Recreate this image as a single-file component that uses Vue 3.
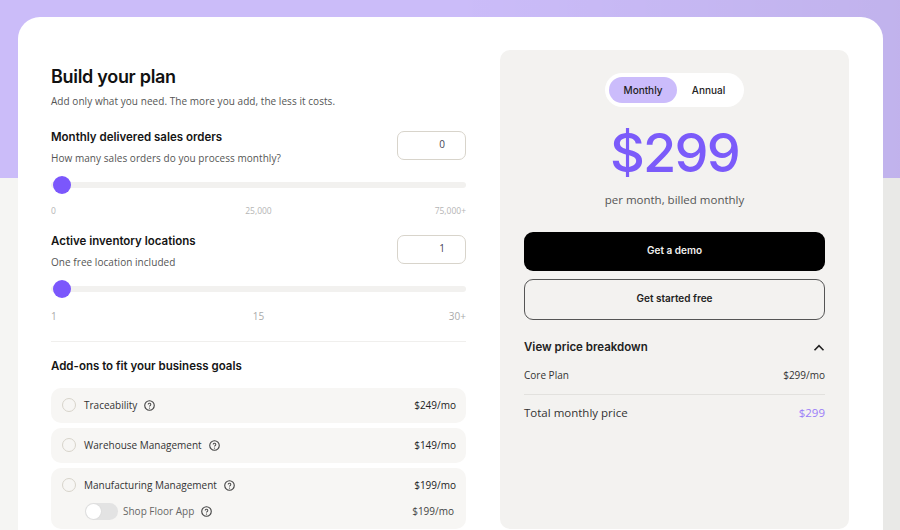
<script setup>
const sliders = [
  { title: 'Monthly delivered sales orders', hint: 'How many sales orders do you process monthly?', value: 0, marks: ['0', '25,000', '75,000+'], big: false },
  { title: 'Active inventory locations', hint: 'One free location included', value: 1, marks: ['1', '15', '30+'], big: true }
]

const addons = [
  { name: 'Traceability', price: '$249/mo' },
  { name: 'Warehouse Management', price: '$149/mo' },
  { name: 'Manufacturing Management', price: '$199/mo', sub: { name: 'Shop Floor App', price: '$199/mo' } }
]
</script>

<template>
  <div class="page">
    <div class="card">
      <section class="left">
        <h1>Build your plan</h1>
        <p class="lead">Add only what you need. The more you add, the less it costs.</p>

        <div v-for="s in sliders" :key="s.title" class="slider">
          <div class="slider-head">
            <div>
              <h3>{{ s.title }}</h3>
              <p class="hint">{{ s.hint }}</p>
            </div>
            <div class="num">{{ s.value }}</div>
          </div>
          <div class="track"><span class="thumb"></span></div>
          <div class="marks" :class="{ big: s.big }">
            <span v-for="m in s.marks" :key="m">{{ m }}</span>
          </div>
        </div>

        <div class="divider"></div>
        <h3 class="addons-title">Add-ons to fit your business goals</h3>

        <div v-for="a in addons" :key="a.name" class="addon">
          <div class="addon-row">
            <span class="radio"></span>
            <span class="addon-name">{{ a.name }}</span>
            <svg class="help" viewBox="0 0 12 12" width="12" height="12">
              <circle cx="6" cy="6" r="5.2" fill="none" stroke="#444" stroke-width="1.2" />
              <path d="M4.6 4.8a1.4 1.4 0 1 1 2.2 1.2c-.5.3-.8.6-.8 1.1" fill="none" stroke="#444" stroke-width="1.1" />
              <circle cx="6" cy="8.8" r=".65" fill="#444" />
            </svg>
            <span class="price">{{ a.price }}</span>
          </div>
          <div v-if="a.sub" class="sub-row">
            <span class="toggle"><span class="knob"></span></span>
            <span class="sub-name">{{ a.sub.name }}</span>
            <svg class="help" viewBox="0 0 12 12" width="12" height="12">
              <circle cx="6" cy="6" r="5.2" fill="none" stroke="#444" stroke-width="1.2" />
              <path d="M4.6 4.8a1.4 1.4 0 1 1 2.2 1.2c-.5.3-.8.6-.8 1.1" fill="none" stroke="#444" stroke-width="1.1" />
              <circle cx="6" cy="8.8" r=".65" fill="#444" />
            </svg>
            <span class="price sub-price">{{ a.sub.price }}</span>
          </div>
        </div>
      </section>

      <aside class="panel">
        <div class="switch">
          <span class="opt active">Monthly</span>
          <span class="opt annual">Annual</span>
        </div>
        <div class="big-price">$299</div>
        <p class="per">per month, billed monthly</p>
        <button class="btn dark">Get a demo</button>
        <button class="btn outline">Get started free</button>
        <div class="breakdown-head">
          <span>View price breakdown</span>
          <svg viewBox="0 0 12 12" width="12" height="12">
            <path d="M1.5 8.2l4.5-4.5 4.5 4.5" fill="none" stroke="#222" stroke-width="1.6" />
          </svg>
        </div>
        <div class="line">
          <span>Core Plan</span>
          <span>$299/mo</span>
        </div>
        <div class="total">
          <span>Total monthly price</span>
          <span class="total-num">$299</span>
        </div>
      </aside>
    </div>
  </div>
</template>

<style>
html, body {
  margin: 0;
  height: 530px;
  overflow: hidden;
}
</style>

<style scoped>
.page {
  height: 530px;
  overflow: hidden;
  padding: 17px 17px 0 18px;
  box-sizing: border-box;
  background:
    linear-gradient(to right, rgba(0, 0, 0, 0) 50%, rgba(0, 0, 0, .05) 100%),
    linear-gradient(#cbbcf9 178px, #f5f5f3 178px);
  font-family: "Open Sans", "Noto Sans", sans-serif;
  color: #1a1a1a;
}
.card {
  display: flex;
  gap: 34px;
  height: 600px;
  padding: 33px 34px 0 33px;
  box-sizing: border-box;
  background: #fff;
  border-radius: 22px;
}
.left {
  width: 415px;
  flex: none;
}
h1 {
  margin: 14px 0 0;
  font: 600 18px/26px Inter, sans-serif;
  letter-spacing: -.3px;
  color: #111;
}
.lead {
  margin: 3px 0 0;
  font-size: 10px;
  line-height: 16px;
  letter-spacing: .05px;
  color: #555;
}
h3 {
  margin: 0;
  font: 600 11.5px/18px Inter, sans-serif;
  color: #151515;
}
.slider {
  margin-top: 19px;
}
.slider + .slider {
  margin-top: 14.5px;
}
.slider-head {
  display: flex;
  justify-content: space-between;
}
.hint {
  margin: 4px 0 0;
  font-size: 10px;
  line-height: 16px;
  letter-spacing: .05px;
  color: #555;
}
.num {
  width: 69px;
  height: 29px;
  margin-top: 3px;
  box-sizing: border-box;
  border: 1.5px solid #d8d4cb;
  border-radius: 7px;
  padding-right: 20px;
  text-align: right;
  font-size: 10px;
  line-height: 25px;
  color: #445;
}
.track {
  position: relative;
  height: 6px;
  margin-top: 16px;
  border-radius: 3px;
  background: #f2f1ef;
}
.thumb {
  position: absolute;
  left: 2px;
  top: -6px;
  width: 18px;
  height: 18px;
  border-radius: 50%;
  background: #7b57fc;
}
.marks {
  display: grid;
  grid-template-columns: 1fr auto 1fr;
  margin-top: 17px;
  font-size: 8.5px;
  line-height: 12px;
  color: #b5b5b5;
}
.marks span:last-child {
  text-align: right;
}
.marks.big {
  font-size: 10px;
  line-height: 14px;
  color: #aaa;
}
.divider {
  height: 1px;
  margin-top: 18px;
  background: #f0efed;
}
.addons-title {
  margin-top: 15.5px;
}
.addon {
  margin-top: 5px;
  padding: 9px 10px 9px 11px;
  border-radius: 10px;
  background: #f7f6f4;
}
.addons-title + .addon {
  margin-top: 12.5px;
}
.addon-row, .sub-row {
  display: flex;
  align-items: center;
}
.addon-row {
  height: 17px;
}
.radio {
  width: 14px;
  height: 14px;
  margin-right: 8px;
  border: 1.5px solid #d8d4cb;
  border-radius: 50%;
  box-sizing: border-box;
}
.addon-name, .sub-name {
  font-size: 10px;
  color: #333;
}
.help {
  width: 11px;
  height: 11px;
  margin-left: 7px;
}
.price {
  margin-left: auto;
  font-size: 10px;
  color: #222;
}
.sub-row {
  margin-top: 9px;
  padding-left: 23px;
}
.toggle {
  position: relative;
  width: 33px;
  height: 17px;
  margin-right: 5px;
  border-radius: 9px;
  background: #e3e3e3;
}
.knob {
  position: absolute;
  left: 1px;
  top: 1px;
  width: 15px;
  height: 15px;
  border-radius: 50%;
  background: #fff;
  box-shadow: 0 0 2px rgba(0, 0, 0, .08);
}
.sub-name {
  color: #666;
}
.sub-price {
  color: #444;
  margin-right: 2px;
}
.panel {
  width: 349px;
  height: 479px;
  flex: none;
  box-sizing: border-box;
  padding: 23px 24px 0;
  background: #f3f2f0;
  border-radius: 10px;
  display: flex;
  flex-direction: column;
  align-items: center;
}
.switch {
  display: flex;
  padding: 4px;
  background: #fff;
  border-radius: 18px;
}
.opt {
  width: 68px;
  height: 26px;
  border-radius: 13px;
  text-align: center;
  font: 500 10px/26px Inter, sans-serif;
  color: #222;
}
.opt.annual {
  width: 63px;
}
.opt.active {
  background: #cbbcfb;
}
.big-price {
  margin-top: 14px;
  font: 550 54px/64px Inter, sans-serif;
  color: #7b5bfa;
  letter-spacing: -1.8px;
}
.per {
  margin: 6px 0 0;
  font-size: 11.5px;
  line-height: 18px;
  color: #555;
}
.btn {
  display: block;
  flex: none;
  width: 100%;
  height: 39px;
  padding: 0 0 3px;
  border-radius: 9px;
  font: 600 10px/1 Inter, sans-serif;
}
.dark {
  margin-top: 23px;
  background: #000;
  border: 0;
  color: #f2f1ef;
}
.outline {
  margin-top: 8px;
  height: 41px;
  background: none;
  border: 1.5px solid #555;
  color: #222;
}
.breakdown-head {
  width: 100%;
  display: flex;
  justify-content: space-between;
  align-items: center;
  margin-top: 18px;
  font: 600 11.5px/18px Inter, sans-serif;
  color: #222;
}
.breakdown-head svg {
  margin-top: 2px;
}
.line, .total {
  width: 100%;
  display: flex;
  justify-content: space-between;
}
.line {
  margin-top: 11px;
  padding-bottom: 11px;
  border-bottom: 1px solid #e2e1de;
  font-size: 10px;
  line-height: 16px;
  color: #333;
}
.total {
  margin-top: 9px;
  font-size: 11.5px;
  line-height: 18px;
  color: #333;
}
.total-num {
  color: #9a7cf8;
}
</style>
